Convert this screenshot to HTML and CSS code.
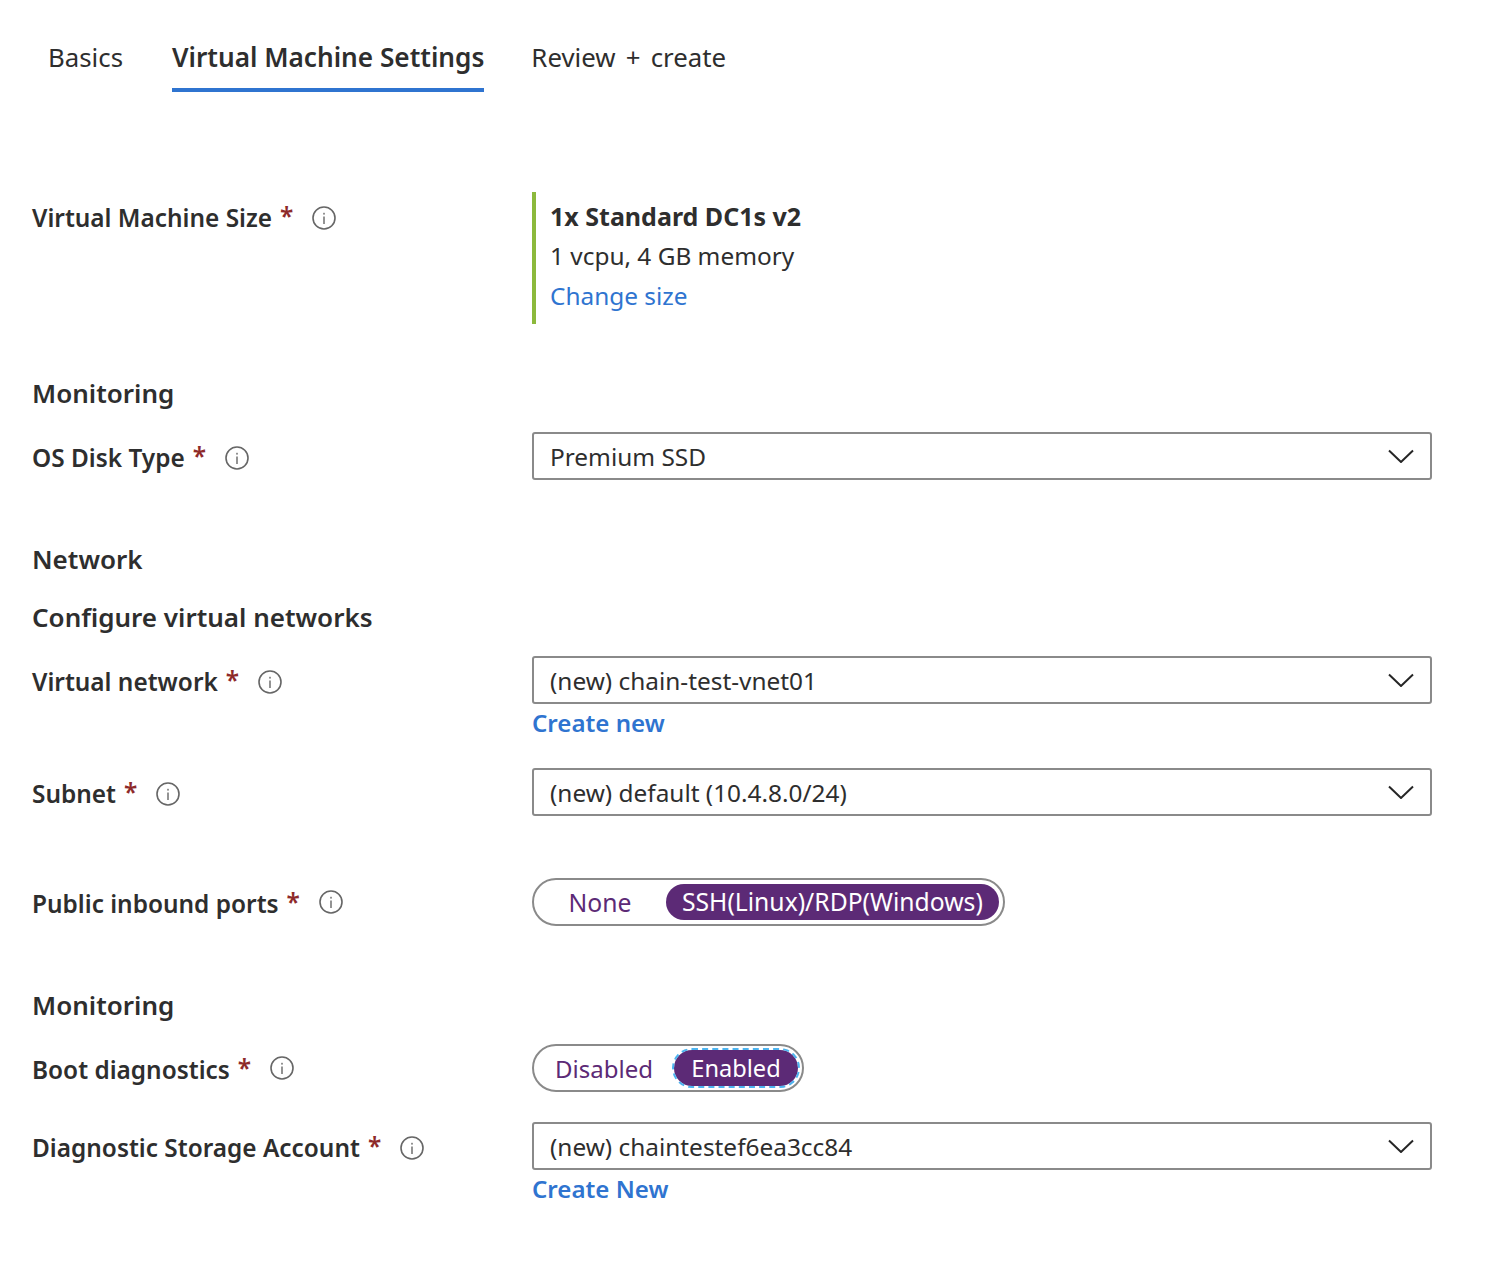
FILE: index.html
```html
<!DOCTYPE html>
<html lang="en">
<head>
    <meta charset="UTF-8">
    <title>Virtual Machine Settings</title>
    <link rel="stylesheet" href="styles.css">
</head>
<body>
    <svg class="sprites" width="0" height="0">
        <symbol id="info" viewBox="0 0 24 24">
            <circle cx="12" cy="12" r="11" fill="none" stroke="#666" stroke-width="1.6"/>
            <rect x="11.3" y="10.5" width="1.4" height="7.5" fill="#666"/>
            <rect x="11.3" y="6.8" width="1.4" height="1.8" fill="#666"/>
        </symbol>
        <symbol id="chevron" viewBox="0 0 26 14">
            <path d="M1 1.5 L13 13 L25 1.5" fill="none" stroke="#262626" stroke-width="2"/>
        </symbol>
    </svg>

    <nav class="tabs">
        <a class="tab">Basics</a>
        <a class="tab active">Virtual Machine Settings</a>
        <a class="tab">Review + create</a>
    </nav>

    <form class="form">
        <div class="row row-size">
            <div class="label">Virtual Machine Size<span class="req">*</span><svg class="info"><use href="#info"/></svg></div>
            <div class="size-box">
                <div class="size-name">1x Standard DC1s v2</div>
                <div>1 vcpu, 4 GB memory</div>
                <a class="link">Change size</a>
            </div>
        </div>

        <h3 class="heading h-monitoring">Monitoring</h3>
        <div class="row row-os">
            <div class="label">OS Disk Type<span class="req">*</span><svg class="info"><use href="#info"/></svg></div>
            <div class="select">Premium SSD<svg class="chevron"><use href="#chevron"/></svg></div>
        </div>

        <h3 class="heading h-network">Network</h3>
        <h3 class="heading h-configure">Configure virtual networks</h3>
        <div class="row row-vnet">
            <div class="label">Virtual network<span class="req">*</span><svg class="info"><use href="#info"/></svg></div>
            <div>
                <div class="select">(new) chain-test-vnet01<svg class="chevron"><use href="#chevron"/></svg></div>
                <a class="link link-strong">Create new</a>
            </div>
        </div>
        <div class="row row-subnet">
            <div class="label">Subnet<span class="req">*</span><svg class="info"><use href="#info"/></svg></div>
            <div class="select">(new) default (10.4.8.0/24)<svg class="chevron"><use href="#chevron"/></svg></div>
        </div>
        <div class="row row-ports">
            <div class="label">Public inbound ports<span class="req">*</span><svg class="info info-up"><use href="#info"/></svg></div>
            <div class="toggle toggle-ports">
                <span class="opt opt-none">None</span>
                <span class="opt on">SSH(Linux)/RDP(Windows)</span>
            </div>
        </div>

        <h3 class="heading h-monitoring2">Monitoring</h3>
        <div class="row row-boot">
            <div class="label">Boot diagnostics<span class="req">*</span><svg class="info info-up"><use href="#info"/></svg></div>
            <div class="toggle toggle-boot">
                <span class="opt opt-disabled">Disabled</span>
                <span class="opt on focus">Enabled</span>
            </div>
        </div>
        <div class="row row-diag">
            <div class="label">Diagnostic Storage Account<span class="req">*</span><svg class="info"><use href="#info"/></svg></div>
            <div>
                <div class="select">(new) chaintestef6ea3cc84<svg class="chevron"><use href="#chevron"/></svg></div>
                <a class="link link-strong">Create New</a>
            </div>
        </div>
    </form>
</body>
</html>
```

FILE: styles.css
```css
* {
    margin: 0;
    padding: 0;
    box-sizing: border-box;
}

body {
    font-family: "Noto Sans", "Open Sans", sans-serif;
    font-size: 24.4px;
    color: #2e2e2e;
    background: #fff;
    padding: 0 66px 0 32px;
}

.sprites {
    display: block;
}

.tabs {
    display: flex;
    height: 92px;
    padding-left: 16px;
    gap: 49px;
    font-size: 25.8px;
}

.tab {
    height: 92px;
    line-height: 114px;
    white-space: nowrap;
    word-spacing: 3.5px;
}

.tab.active {
    font-size: 26.2px;
    font-weight: 600;
    word-spacing: 0;
    margin-right: -2px;
    border-bottom: 4px solid #2f74d0;
}

.row {
    display: grid;
    grid-template-columns: 500px 900px;
}

.label {
    display: flex;
    align-items: center;
    height: 52px;
    padding-bottom: 2px;
    font-weight: 600;
    white-space: nowrap;
}

.req {
    color: #8e2a2a;
    margin-left: 8px;
    margin-top: -4px;
}

.info {
    width: 24px;
    height: 24px;
    margin-left: 19px;
    margin-top: 2px;
}

.info-up {
    margin-top: -2px;
}

.heading {
    font-size: 26px;
    font-weight: 600;
    line-height: 38px;
    padding-bottom: 2px;
}

.size-box {
    height: 132px;
    border-left: 4px solid #8cb93c;
    padding-left: 14px;
    line-height: 40px;
    padding-top: 4px;
}

.size-name {
    font-size: 25px;
    font-weight: 700;
}

.link {
    color: #2f74d0;
    display: block;
}

.link-strong {
    font-size: 24.1px;
    font-weight: 600;
    line-height: 37px;
}

.select {
    display: flex;
    align-items: center;
    justify-content: space-between;
    height: 48px;
    border: 2px solid #8a8a8a;
    border-radius: 3px;
    padding: 0 16px;
    white-space: nowrap;
}

.chevron {
    width: 26px;
    height: 14px;
}

.toggle {
    display: flex;
    align-items: center;
    height: 48px;
    border: 2px solid #8a8a8a;
    border-radius: 24px;
    color: #5c2a76;
    white-space: nowrap;
}

.toggle-ports {
    width: 473px;
    font-size: 24.7px;
}

.toggle-boot {
    width: 272px;
    font-size: 24px;
}

.opt-none {
    width: 132px;
    text-align: center;
}

.opt-disabled {
    width: 140px;
    text-align: center;
}

.opt.on {
    height: 36px;
    line-height: 36px;
    padding: 0 16px;
    border-radius: 18px;
    background: #5c2a76;
    color: #fff;
}

.opt.focus {
    width: 124px;
    text-align: center;
    padding: 0;
    font-size: 23.6px;
    outline: 2px dashed #4db4f0;
    outline-offset: 0;
}

.row-size { margin-top: 100px; }
.h-monitoring { margin-top: 50px; }
.row-os { margin-top: 18px; }
.h-network { margin-top: 56px; }
.h-configure { margin-top: 18px; }
.row-vnet { margin-top: 18px; }
.row-subnet { margin-top: 27px; }
.row-ports { margin-top: 58px; }
.h-monitoring2 { margin-top: 56px; }
.row-boot { margin-top: 18px; }
.row-diag { margin-top: 26px; }
```
